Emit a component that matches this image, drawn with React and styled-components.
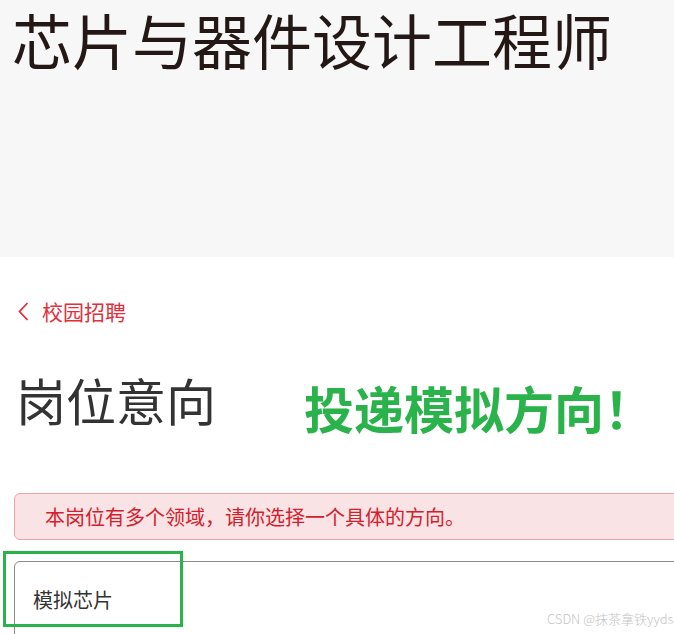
import React from 'react';
import styled, { createGlobalStyle } from 'styled-components';

const Global = createGlobalStyle`
  html, body { margin: 0; padding: 0; background: #ffffff; overflow: hidden; }
  body { font-family: "Noto Sans CJK SC", "Noto Sans", sans-serif; }
`;

const Page = styled.div`
  position: relative;
  width: 674px;
  height: 634px;
  overflow: hidden;
  background: #ffffff;
`;

const Hero = styled.header`
  height: 257px;
  box-sizing: border-box;
  background: #f7f7f7;
  padding: 0 0 0 12px;
`;

const Title = styled.h1`
  margin: 0;
  font-size: 60px;
  line-height: 78px;
  font-weight: 400;
  color: #231815;
  white-space: nowrap;
`;

const Main = styled.main`
  display: flex;
  flex-direction: column;
  padding: 44px 0 0 14px;
`;

const BackLink = styled.a`
  display: flex;
  align-items: center;
  gap: 13px;
  padding-left: 4px;
  font-size: 21px;
  line-height: 1;
  color: #e0303c;
  text-decoration: none;
`;

const HeadingRow = styled.div`
  display: flex;
  align-items: flex-start;
  gap: 88px;
  margin-top: 52px;
`;

const Heading = styled.h2`
  margin: 0 0 0 2px;
  font-size: 50px;
  line-height: 1;
  font-weight: 400;
  color: #333333;
`;

const Annotation = styled.div`
  margin-top: 8px;
  font-size: 50px;
  line-height: 1;
  font-weight: 700;
  color: #2bb34b;
  white-space: nowrap;
`;

const Alert = styled.div`
  margin-top: 61px;
  width: 720px;
  height: 47px;
  box-sizing: border-box;
  display: flex;
  align-items: center;
  padding-left: 30px;
  border: 1.5px solid #eea2a9;
  border-radius: 6px;
  background: #f9e3e5;
  color: #d4202c;
  font-size: 20px;
  line-height: 1;
`;

const SelectBox = styled.div`
  margin-top: 21px;
  width: 720px;
  height: 110px;
  box-sizing: border-box;
  padding: 28px 0 0 18px;
  border: 1.5px solid #8a8a8a;
  border-radius: 6px;
  color: #333333;
  font-size: 20px;
  line-height: 1;
`;

const Highlight = styled.div`
  position: absolute;
  left: 3px;
  top: 551px;
  width: 180px;
  height: 76px;
  box-sizing: border-box;
  border: 3px solid #2bb34b;
  pointer-events: none;
`;

const Watermark = styled.div`
  position: absolute;
  left: 547px;
  top: 612px;
  font-size: 13px;
  line-height: 1;
  font-weight: 300;
  color: #c4c4c4;
  white-space: nowrap;
`;

const Chevron = () => (
  <svg width="11" height="19" viewBox="0 0 11 19" fill="none">
    <path d="M9.5 1 L1.5 9.5 L9.5 18" stroke="#e0303c" strokeWidth="1.8" />
  </svg>
);

export default function App() {
  return (
    <Page>
      <Global />
      <Hero>
        <Title>芯片与器件设计工程师</Title>
      </Hero>
      <Main>
        <BackLink href="#">
          <Chevron />
          <span>校园招聘</span>
        </BackLink>
        <HeadingRow>
          <Heading>岗位意向</Heading>
          <Annotation>投递模拟方向！</Annotation>
        </HeadingRow>
        <Alert>本岗位有多个领域，请你选择一个具体的方向。</Alert>
        <SelectBox>模拟芯片</SelectBox>
      </Main>
      <Highlight />
      <Watermark>CSDN @抹茶拿铁yyds</Watermark>
    </Page>
  );
}
